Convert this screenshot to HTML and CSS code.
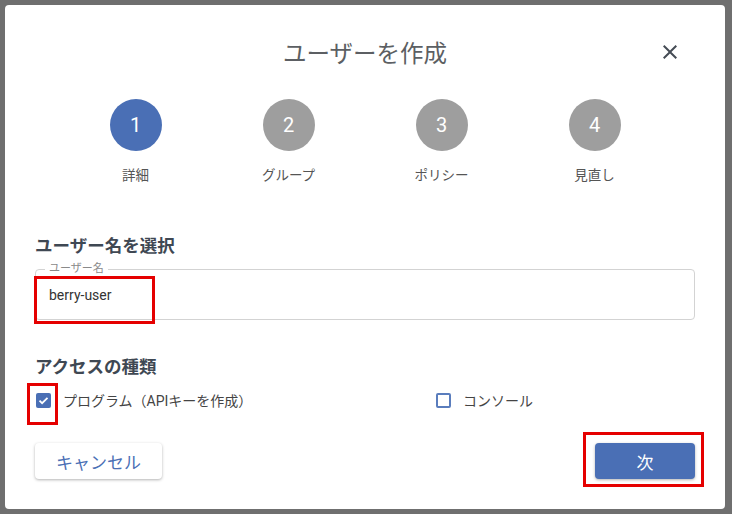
FILE: index.html
```html
<!DOCTYPE html>
<html lang="ja">
<head>
<meta charset="utf-8">
<title>ユーザーを作成</title>
<link rel="stylesheet" href="styles.css">
</head>
<body>
<div class="dialog">
  <header class="header">
    <div></div>
    <h1 class="title">ユーザーを作成</h1>
    <button class="close" aria-label="閉じる">
      <svg width="24" height="24" viewBox="0 0 24 24"><path d="M19 6.41L17.59 5 12 10.59 6.41 5 5 6.41 10.59 12 5 17.59 6.41 19 12 13.41 17.59 19 19 17.59 13.41 12z" fill="#454c55"/></svg>
    </button>
  </header>

  <ol class="stepper">
    <li class="step active"><span class="circle">1</span><span class="step-label">詳細</span></li>
    <li class="step"><span class="circle">2</span><span class="step-label">グループ</span></li>
    <li class="step"><span class="circle">3</span><span class="step-label">ポリシー</span></li>
    <li class="step"><span class="circle">4</span><span class="step-label">見直し</span></li>
  </ol>

  <h2 class="section-title first">ユーザー名を選択</h2>
  <div class="field">
    <span class="field-label">ユーザー名</span>
    <span class="field-value">berry-user</span>
    <span class="mark mark-input"></span>
  </div>

  <h2 class="section-title second">アクセスの種類</h2>
  <div class="options">
    <label class="option">
      <span class="box checked">
        <svg width="15" height="15" viewBox="0 0 15 15"><path d="M3.5 7.6l2.6 2.6 5.4-5.4" fill="none" stroke="#fff" stroke-width="1.8"/></svg>
        <span class="mark mark-check"></span>
      </span>
      <span class="option-text">プログラム（APIキーを作成）</span>
    </label>
    <label class="option">
      <span class="box"></span>
      <span class="option-text">コンソール</span>
    </label>
  </div>

  <div class="actions">
    <button class="btn btn-cancel">キャンセル</button>
    <button class="btn btn-next">次<span class="mark mark-next"></span></button>
  </div>
</div>
</body>
</html>
```

FILE: styles.css
```css
* { box-sizing: border-box; }

html, body {
  margin: 0;
  padding: 0;
}

body {
  width: 732px;
  height: 514px;
  overflow: hidden;
  padding: 5px 7px 5px 5px;
  background-color: #6f6f6f;
  background-image: repeating-linear-gradient(to bottom, transparent 0, transparent 57px, #7a7a7a 57px, #7a7a7a 58px, transparent 58px, transparent 100px);
  background-size: 100% 50px;
  background-position: 0 8px;
  font-family: "Roboto", "Noto Sans CJK JP", sans-serif;
}

.dialog {
  width: 720px;
  height: 504px;
  background: #fff;
  border-radius: 4px;
  padding: 32px 30px 30px;
  display: flex;
  flex-direction: column;
}

.header {
  display: grid;
  grid-template-columns: 1fr auto 1fr;
  align-items: center;
  height: 30px;
  margin: 0 -30px;
}

.title {
  margin: 0;
  font-size: 23.5px;
  font-weight: 400;
  line-height: 30px;
  color: #5c5f63;
  font-family: "Noto Sans CJK JP", "Roboto", sans-serif;
}

.close {
  justify-self: end;
  margin-right: 43px;
  width: 24px;
  height: 24px;
  padding: 0;
  border: 0;
  background: none;
  display: flex;
}

.stepper {
  list-style: none;
  margin: 32px auto 0;
  padding: 0;
  display: grid;
  grid-template-columns: repeat(4, 153px);
  width: 612px;
}

.step {
  display: flex;
  flex-direction: column;
  align-items: center;
}

.circle {
  width: 52px;
  height: 52px;
  border-radius: 50%;
  background: #9e9e9e;
  color: #fff;
  display: flex;
  align-items: center;
  justify-content: center;
  font-family: "Roboto", sans-serif;
  font-size: 20px;
}

.step.active .circle {
  background: #4a6fb5;
}

.step-label {
  margin-top: 14px;
  font-size: 13.5px;
  line-height: 20px;
  color: #555;
}

.section-title {
  margin: 0;
  font-size: 17.5px;
  line-height: 24px;
  font-weight: 700;
  color: #3f4853;
  font-family: "Noto Sans CJK JP", "Roboto", sans-serif;
}

.section-title.first { margin-top: 48px; }
.section-title.second { margin-top: 34px; }

.field {
  position: relative;
  margin-top: 12px;
  height: 51px;
  border: 1px solid #d3d3d3;
  border-radius: 4px;
  padding: 0 13px;
  display: flex;
  align-items: center;
}

.field-label {
  position: absolute;
  left: 9px;
  top: -8px;
  padding: 0 4px;
  background: #fff;
  font-size: 11px;
  line-height: 14px;
  color: #8a8a8a;
}

.field-value {
  font-size: 14px;
  color: #333;
}

.mark {
  position: absolute;
  border: 3px solid #e50000;
  pointer-events: none;
}

.mark-input {
  left: -2px;
  top: 6px;
  width: 121px;
  height: 48px;
}

.options {
  margin-top: 10px;
  display: grid;
  grid-template-columns: 400px 1fr;
  height: 24px;
}

.option {
  display: flex;
  align-items: center;
  font-size: 14px;
  color: #444;
  padding-left: 1px;
}

.box {
  position: relative;
  width: 15px;
  height: 15px;
  border: 2px solid #5a7dbd;
  border-radius: 2px;
  margin-right: 12px;
  display: flex;
}

.box.checked {
  background: #4a6fb5;
  border: 0;
}

.mark-check {
  left: -9px;
  top: -10px;
  width: 31px;
  height: 42px;
}

.actions {
  margin-top: 31px;
  display: flex;
  justify-content: space-between;
}

.btn {
  position: relative;
  height: 36px;
  border: 0;
  border-radius: 4px;
  font-family: "Noto Sans CJK JP", "Roboto", sans-serif;
  font-size: 17px;
  padding: 0;
  box-shadow: 0 1px 3px rgba(0,0,0,0.3);
}

.btn-cancel {
  width: 127px;
  background: #fff;
  color: #4a6fb5;
}

.btn-next {
  width: 100px;
  background: #4a6fb5;
  color: #fff;
}

.mark-next {
  left: -12px;
  top: -11px;
  width: 121px;
  height: 55px;
}
```
